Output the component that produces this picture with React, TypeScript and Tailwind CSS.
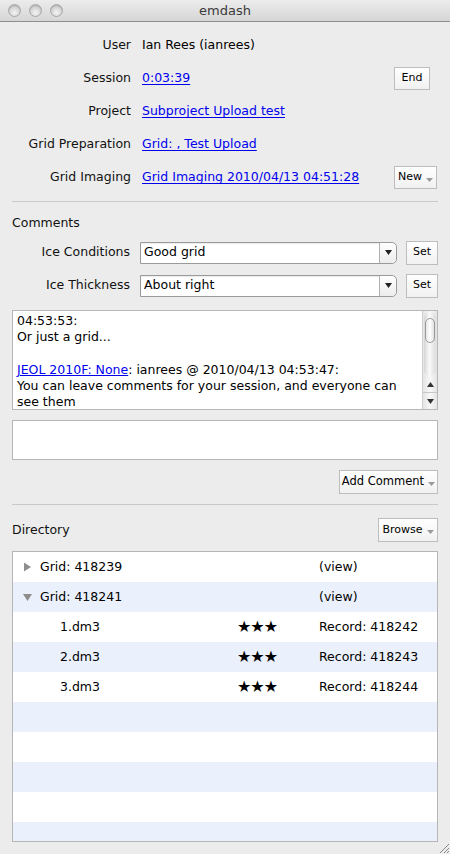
import React from "react";

const font = { fontFamily: '"DejaVu Sans", "Lucida Grande", sans-serif' };

function Light() {
  return (
    <div className="w-[13px] h-[13px] rounded-full border border-[#a8a8a8] bg-[radial-gradient(circle_at_50%_70%,#f4f4f4,#d2d2d2_60%,#c4c4c4)] shadow-[inset_0_1px_1px_rgba(0,0,0,0.15)]" />
  );
}

function Caret() {
  return (
    <svg width="7" height="5" viewBox="0 0 7 5" className="ml-[4px] mt-[5px]">
      <path d="M0 0 L7 0 L3.5 4 Z" fill="#9a9a9a" />
    </svg>
  );
}

function Btn({ children, menu, cls }: { children: React.ReactNode; menu?: boolean; cls?: string }) {
  return (
    <div
      className={
        "flex items-center justify-center border border-[#bdbdbd] bg-[linear-gradient(#ffffff,#f1f1f1)] text-black " +
        (cls || "")
      }
    >
      <span>{children}</span>
      {menu && <Caret />}
    </div>
  );
}

function Row({ label, children, btn }: { label: string; children: React.ReactNode; btn?: React.ReactNode }) {
  return (
    <div className="flex items-center h-[33px]">
      <div className="w-[131px] text-right text-[#111] shrink-0">{label}</div>
      <div className="ml-[11px] flex-1 min-w-0">{children}</div>
      <div className="w-[43px] shrink-0">{btn}</div>
    </div>
  );
}

function Link({ children }: { children: React.ReactNode }) {
  return <span className="text-[#0000ee] underline underline-offset-[2px]">{children}</span>;
}

function Select({ value }: { value: string }) {
  return (
    <div className="flex h-[22px] w-[257px] bg-white border border-[#9a9a9a] rounded-r-[5px] shadow-[inset_0_1px_1px_rgba(0,0,0,0.08)]">
      <div className="flex-1 pl-[3px] flex items-center text-black">{value}</div>
      <div className="w-[17px] border-l border-[#b0b0b0] rounded-r-[5px] flex items-center justify-center bg-[linear-gradient(#ffffff,#ececec)]">
        <svg width="7" height="5" viewBox="0 0 7 5">
          <path d="M0 0 L7 0 L3.5 5 Z" fill="#222" />
        </svg>
      </div>
    </div>
  );
}

function Tri({ open }: { open?: boolean }) {
  return open ? (
    <svg width="10" height="9" viewBox="0 0 10 9">
      <path d="M0 1 L9 1 L4.5 8 Z" fill="#8e8e8e" />
    </svg>
  ) : (
    <svg width="10" height="10" viewBox="0 0 10 10">
      <path d="M1 0.5 L8 5 L1 9.5 Z" fill="#8e8e8e" />
    </svg>
  );
}

export default function App() {
  const rows = [
    { kind: "grid", name: "Grid: 418239", right: "(view)" },
    { kind: "gridopen", name: "Grid: 418241", right: "(view)" },
    { kind: "file", name: "1.dm3", right: "Record: 418242" },
    { kind: "file", name: "2.dm3", right: "Record: 418243" },
    { kind: "file", name: "3.dm3", right: "Record: 418244" },
    { kind: "empty" },
    { kind: "empty" },
    { kind: "empty" },
    { kind: "empty" },
    { kind: "empty" },
  ];
  return (
    <div className="w-[450px] h-[854px] bg-[#ececec] flex flex-col overflow-hidden text-[12.5px] text-black" style={font}>
      {/* Title bar */}
      <div className="h-[22px] shrink-0 relative flex items-center border-b border-[#8f8f8f] bg-[linear-gradient(#ececec,#d6d6d6)]">
        <div className="flex gap-[8px] pl-[8px]">
          <Light />
          <Light />
          <Light />
        </div>
        <div className="absolute inset-0 flex items-center justify-center text-[13px] text-[#3a3a3a]">emdash</div>
      </div>

      {/* Info rows */}
      <div className="pt-[7px] pr-[13px]">
        <Row label="User">Ian Rees (ianrees)</Row>
        <Row label="Session" btn={<Btn cls="w-[36px] h-[23px] text-[11px]">End</Btn>}>
          <Link>0:03:39</Link>
        </Row>
        <Row label="Project">
          <Link>Subproject Upload test</Link>
        </Row>
        <Row label="Grid Preparation">
          <Link>Grid: , Test Upload</Link>
        </Row>
        <Row label="Grid Imaging" btn={<Btn menu cls="w-[43px] h-[23px] text-[11px]">New</Btn>}>
          <Link>Grid Imaging 2010/04/13 04:51:28</Link>
        </Row>
      </div>

      <div className="mx-[12px] mt-[7px] h-px bg-[#c9c9c9] shrink-0" />

      {/* Comments */}
      <div className="px-[12px] pt-[12px]">
        <div className="text-[#111] leading-[17px]">Comments</div>
        <div className="mt-[10px] flex items-center h-[23px]">
          <div className="w-[118px] text-right text-[#111]">Ice Conditions</div>
          <div className="ml-[10px]">
            <Select value="Good grid" />
          </div>
          <Btn cls="ml-[9px] w-[32px] h-[24px] text-[11px]">Set</Btn>
        </div>
        <div className="mt-[10px] flex items-center h-[23px]">
          <div className="w-[118px] text-right text-[#111]">Ice Thickness</div>
          <div className="ml-[10px]">
            <Select value="About right" />
          </div>
          <Btn cls="ml-[9px] w-[32px] h-[24px] text-[11px]">Set</Btn>
        </div>

        <div className="mt-[13px] h-[100px] bg-white border border-[#b7b7b7] flex">
          <div className="flex-1 pl-[4px] pt-[2px] leading-[16.3px] overflow-hidden">
            <div>04:53:53:</div>
            <div>Or just a grid...</div>
            <div>&nbsp;</div>
            <div>
              <span className="text-[#0000ee] underline">JEOL 2010F: None</span>: ianrees @ 2010/04/13 04:53:47:
            </div>
            <div>You can leave comments for your session, and everyone can</div>
            <div>see them</div>
          </div>
          <div className="w-[15px] border-l border-[#d0d0d0] bg-[linear-gradient(90deg,#e4e4e4,#f8f8f8_50%,#e4e4e4)] flex flex-col">
            <div className="mx-[1px] mt-[1px] h-[64px] rounded-full bg-[linear-gradient(90deg,#d6d6d6,#fafafa_45%,#dcdcdc)] relative">
              <div className="absolute left-[1px] right-[1px] top-[6px] h-[25px] rounded-full border border-[#9a9a9a] bg-[linear-gradient(90deg,#e8e8e8,#ffffff_50%,#e0e0e0)]" />
            </div>
            <div className="flex-1" />
            <div className="h-[16px] flex items-center justify-center border-b border-[#c8c8c8]">
              <svg width="7" height="5" viewBox="0 0 7 5">
                <path d="M3.5 0 L7 5 L0 5 Z" fill="#333" />
              </svg>
            </div>
            <div className="h-[16px] flex items-center justify-center">
              <svg width="7" height="5" viewBox="0 0 7 5">
                <path d="M0 0 L7 0 L3.5 5 Z" fill="#333" />
              </svg>
            </div>
          </div>
        </div>

        <div className="mt-[10px] h-[40px] bg-white border border-[#b7b7b7]" />

        <div className="mt-[10px] flex justify-end">
          <Btn menu cls="w-[99px] h-[24px] text-[11.5px]">Add Comment</Btn>
        </div>
      </div>

      <div className="mx-[12px] mt-[10px] h-px bg-[#c9c9c9] shrink-0" />

      {/* Directory */}
      <div className="px-[12px] pt-[13px] flex items-center justify-between">
        <div className="text-[#111]">Directory</div>
        <Btn menu cls="w-[60px] h-[24px] text-[11px]">Browse</Btn>
      </div>

      <div className="mx-[12px] mt-[9px] h-[291px] border border-[#b5b5b5] bg-white overflow-hidden shrink-0">
        {rows.map((r, i) => (
          <div key={i} className={"h-[30px] flex items-center " + (i % 2 === 1 ? "bg-[#ebf1fc]" : "bg-white")}>
            {r.kind === "grid" || r.kind === "gridopen" ? (
              <>
                <div className="w-[27px] flex justify-center pl-[2px]">
                  <Tri open={r.kind === "gridopen"} />
                </div>
                <div className="w-[279px]">{r.name}</div>
                <div>{r.right}</div>
              </>
            ) : r.kind === "file" ? (
              <>
                <div className="w-[224px] pl-[47px]">{r.name}</div>
                <div className="w-[82px] text-[16px] tracking-[-1px]">★★★</div>
                <div>{r.right}</div>
              </>
            ) : null}
          </div>
        ))}
      </div>

      {/* Resize grip */}
      <div className="flex-1 flex justify-end items-end">
        <svg width="12" height="12" viewBox="0 0 12 12">
          <path d="M11 2 L2 11 M11 6 L6 11 M11 9 L9 11" stroke="#8a8a8a" strokeWidth="1" />
        </svg>
      </div>
    </div>
  );
}
